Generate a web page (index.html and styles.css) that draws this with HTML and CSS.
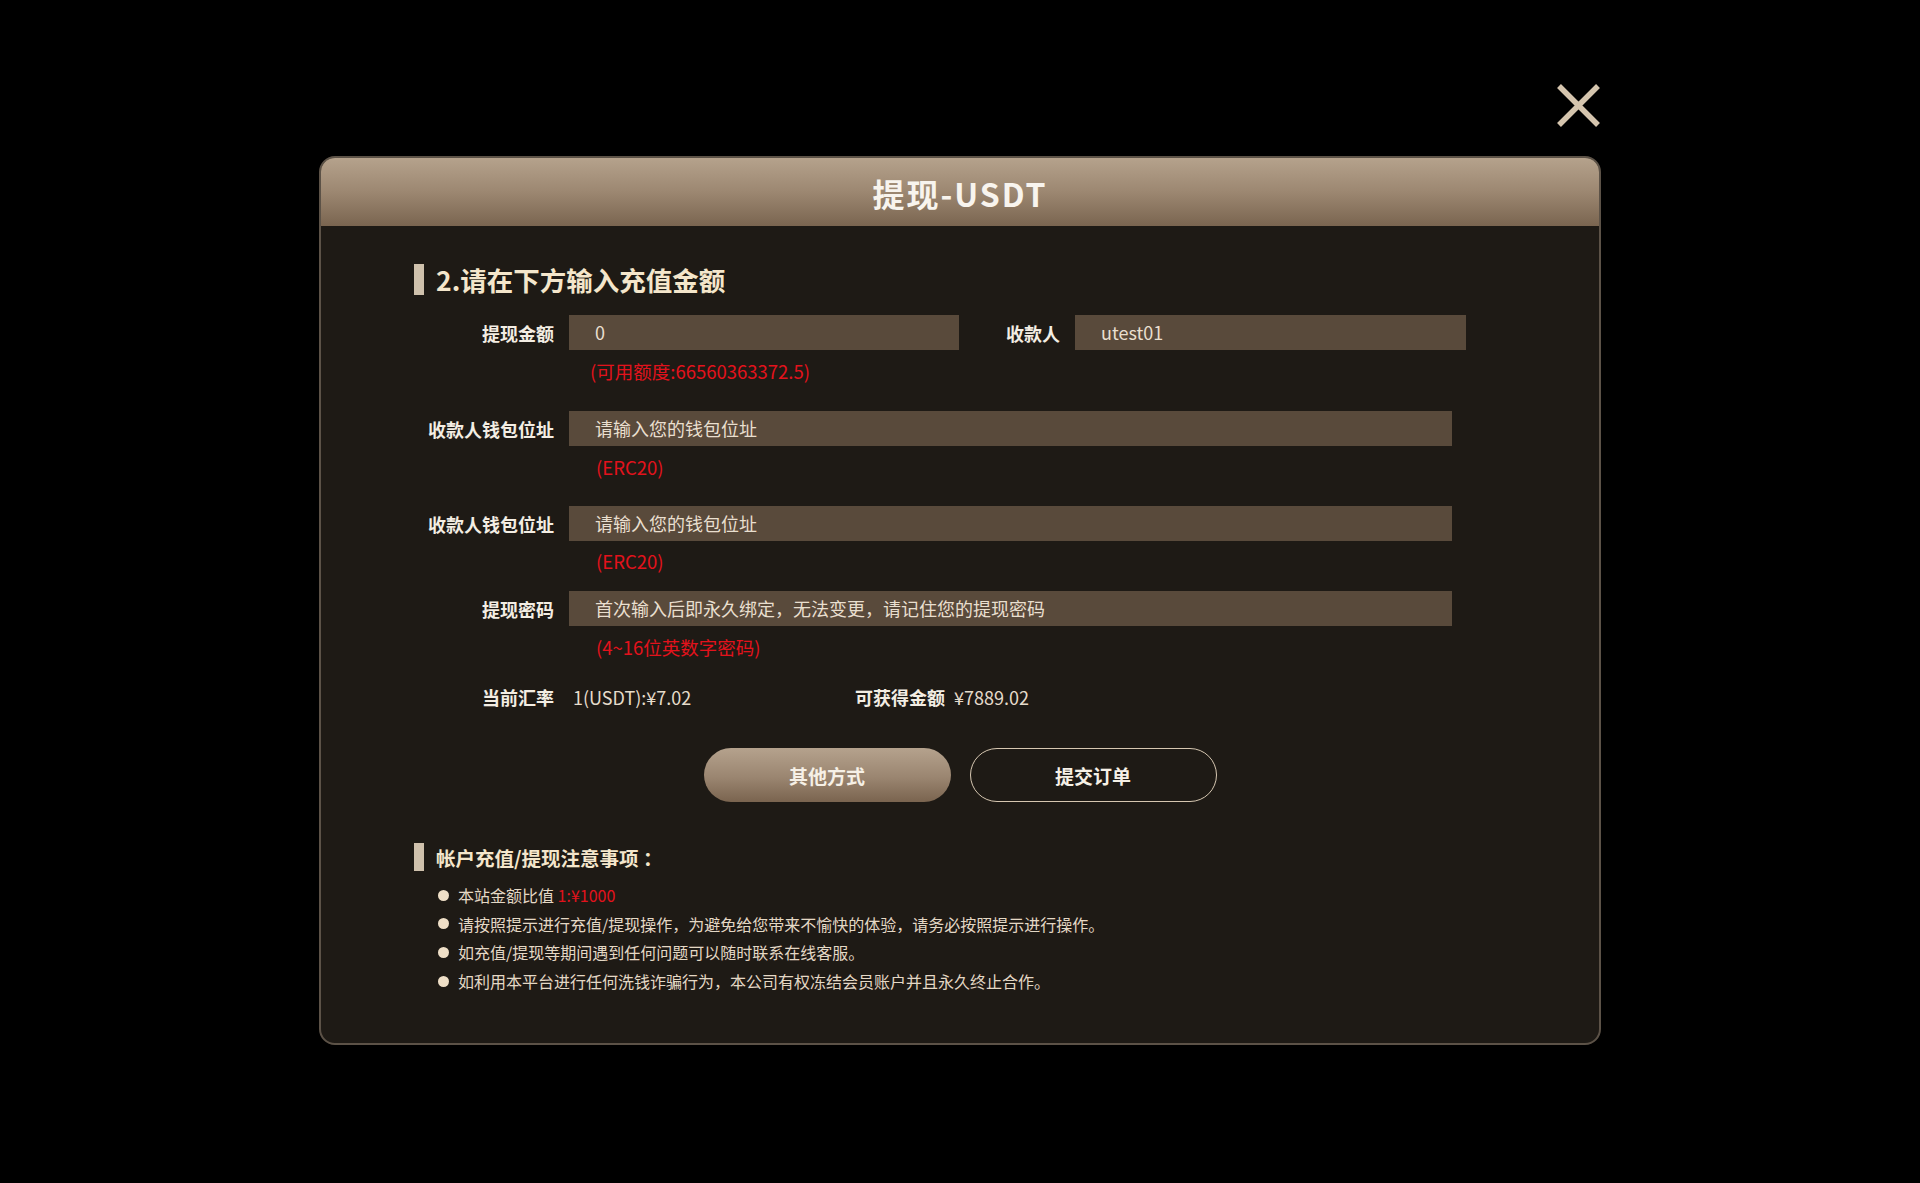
FILE: index.html
```html
<!DOCTYPE html>
<html lang="zh-CN">
<head>
<meta charset="utf-8">
<title>提现-USDT</title>
<link rel="stylesheet" href="styles.css">
</head>
<body>
<div class="wrap">
  <div class="close-row">
    <button class="close" aria-label="关闭">
      <svg width="45" height="45" viewBox="0 0 45 45"><path d="M3 3 L42 42 M42 3 L3 42" stroke="#d5c5ae" stroke-width="5.5" stroke-linecap="butt" fill="none"/></svg>
    </button>
  </div>
  <div class="modal">
    <div class="modal-head">提现-USDT</div>
    <div class="modal-body">
      <div class="sec-title"><span class="bar"></span><span>2.请在下方输入充值金额</span></div>

      <div class="row row-two r1">
        <label class="lbl">提现金额</label>
        <div class="field">0</div>
        <label class="lbl">收款人</label>
        <div class="field">utest01</div>
      </div>
      <div class="hint h1">(可用额度:66560363372.5)</div>

      <div class="row r2">
        <label class="lbl">收款人钱包位址</label>
        <div class="field">请输入您的钱包位址</div>
      </div>
      <div class="hint h2">(ERC20)</div>

      <div class="row r3">
        <label class="lbl">收款人钱包位址</label>
        <div class="field">请输入您的钱包位址</div>
      </div>
      <div class="hint h3">(ERC20)</div>

      <div class="row r4">
        <label class="lbl">提现密码</label>
        <div class="field">首次输入后即永久绑定，无法变更，请记住您的提现密码</div>
      </div>
      <div class="hint h4">(4~16位英数字密码)</div>

      <div class="rate">
        <span class="lbl">当前汇率</span>
        <span class="val v1">1(USDT):¥7.02</span>
        <span class="lbl2">可获得金额</span>
        <span class="val v2">¥7889.02</span>
      </div>

      <div class="btns">
        <button class="btn btn-fill">其他方式</button>
        <button class="btn btn-line">提交订单</button>
      </div>

      <div class="notes-title"><span class="bar"></span><span>帐户充值/提现注意事项 ：</span></div>
      <ul class="notes">
        <li><span class="dot"></span>本站金额比值 <span class="red">1:¥1000</span></li>
        <li><span class="dot"></span>请按照提示进行充值/提现操作，为避免给您带来不愉快的体验，请务必按照提示进行操作。</li>
        <li><span class="dot"></span>如充值/提现等期间遇到任何问题可以随时联系在线客服。</li>
        <li><span class="dot"></span>如利用本平台进行任何洗钱诈骗行为，本公司有权冻结会员账户并且永久终止合作。</li>
      </ul>
    </div>
  </div>
</div>
</body>
</html>
```

FILE: styles.css
```css
* { box-sizing: border-box; }
html, body { margin: 0; padding: 0; }
body {
  background: #000;
  font-family: "Noto Sans CJK SC", "Noto Sans", sans-serif;
  color: #e8dccb;
  height: 1183px;
  overflow: hidden;
}
.wrap {
  width: 1282px;
  margin: 0 auto;
}
.close-row {
  display: flex;
  justify-content: flex-end;
  padding-top: 83px;
}
.close {
  width: 45px;
  height: 45px;
  padding: 0;
  border: 0;
  background: none;
  display: block;
}
.close svg { display: block; }
.modal {
  margin-top: 28px;
  border: 2px solid #5c5247;
  border-radius: 16px;
  background: #1e1a15;
  overflow: hidden;
}
.modal-head {
  height: 68px;
  background: linear-gradient(to bottom, #b5a28c 0%, #9c8771 50%, #7a6550 100%);
  color: #f8f4ee;
  font-size: 32px;
  font-weight: bold;
  letter-spacing: 2px;
  display: flex;
  align-items: center;
  justify-content: center;
  padding-top: 1px;
}
.modal-body {
  padding: 38px 0 48px 93px;
}
.sec-title, .notes-title {
  display: flex;
  align-items: center;
  gap: 12px;
  color: #f4e6cb;
}
.sec-title { height: 31px; font-size: 26.5px; font-weight: bold; }
.bar {
  width: 10px;
  align-self: stretch;
  background: #cfc1ac;
}
.row {
  display: grid;
  grid-template-columns: 140px 883px;
  column-gap: 15px;
  align-items: center;
}
.row-two { grid-template-columns: 140px 390px 86px 391px; }
.lbl, .lbl2 {
  font-size: 18px;
  font-weight: bold;
  color: #f3ede3;
  text-align: right;
  white-space: nowrap;
}
.field {
  height: 35px;
  background: #594a3b;
  padding-left: 26px;
  font-size: 18px;
  line-height: 35px;
  color: #e9dfcf;
  white-space: nowrap;
}
.hint {
  font-size: 18.5px;
  line-height: 20px;
  height: 20px;
  color: #e3121c;
  padding-left: 182px;
}
.r1 { margin-top: 20px; }
.h1 { margin-top: 11px; padding-left: 176px; }
.r2 { margin-top: 30px; }
.h2 { margin-top: 11px; }
.r3 { margin-top: 29px; }
.h3 { margin-top: 10px; }
.r4 { margin-top: 20px; }
.h4 { margin-top: 11px; }

.rate {
  margin-top: 30px;
  height: 20px;
  display: flex;
  align-items: center;
  font-size: 18px;
}
.rate .lbl { width: 140px; }
.val { color: #e6dccb; white-space: nowrap; }
.v1 { margin-left: 19px; width: 282px; }
.v2 { margin-left: 9px; }

.btns {
  margin-top: 41px;
  display: flex;
  justify-content: center;
  gap: 19px;
  margin-left: -93px;
}
.btn {
  width: 247px;
  height: 54px;
  border-radius: 27px;
  font-family: inherit;
  font-size: 19px;
  font-weight: bold;
  color: #f6f0e6;
  padding: 0;
}
.btn-fill {
  border: 0;
  background: linear-gradient(to bottom, #b5a28d 0%, #9a8570 55%, #7a644f 100%);
}
.btn-line {
  background: transparent;
  border: 1px solid #d6c7b1;
}

.notes-title {
  margin-top: 41px;
  height: 28px;
  font-size: 19.5px;
  font-weight: bold;
}
.notes {
  list-style: none;
  margin: 10px 0 0 0;
  padding: 0 0 0 24px;
}
.notes li {
  height: 28.6px;
  display: flex;
  align-items: center;
  font-size: 16px;
  color: #e4d8c5;
  white-space: pre;
}
.dot {
  width: 11px;
  height: 11px;
  border-radius: 50%;
  background: #efdfc7;
  margin-right: 9px;
  flex: none;
}
.red { color: #e3121c; }
```
